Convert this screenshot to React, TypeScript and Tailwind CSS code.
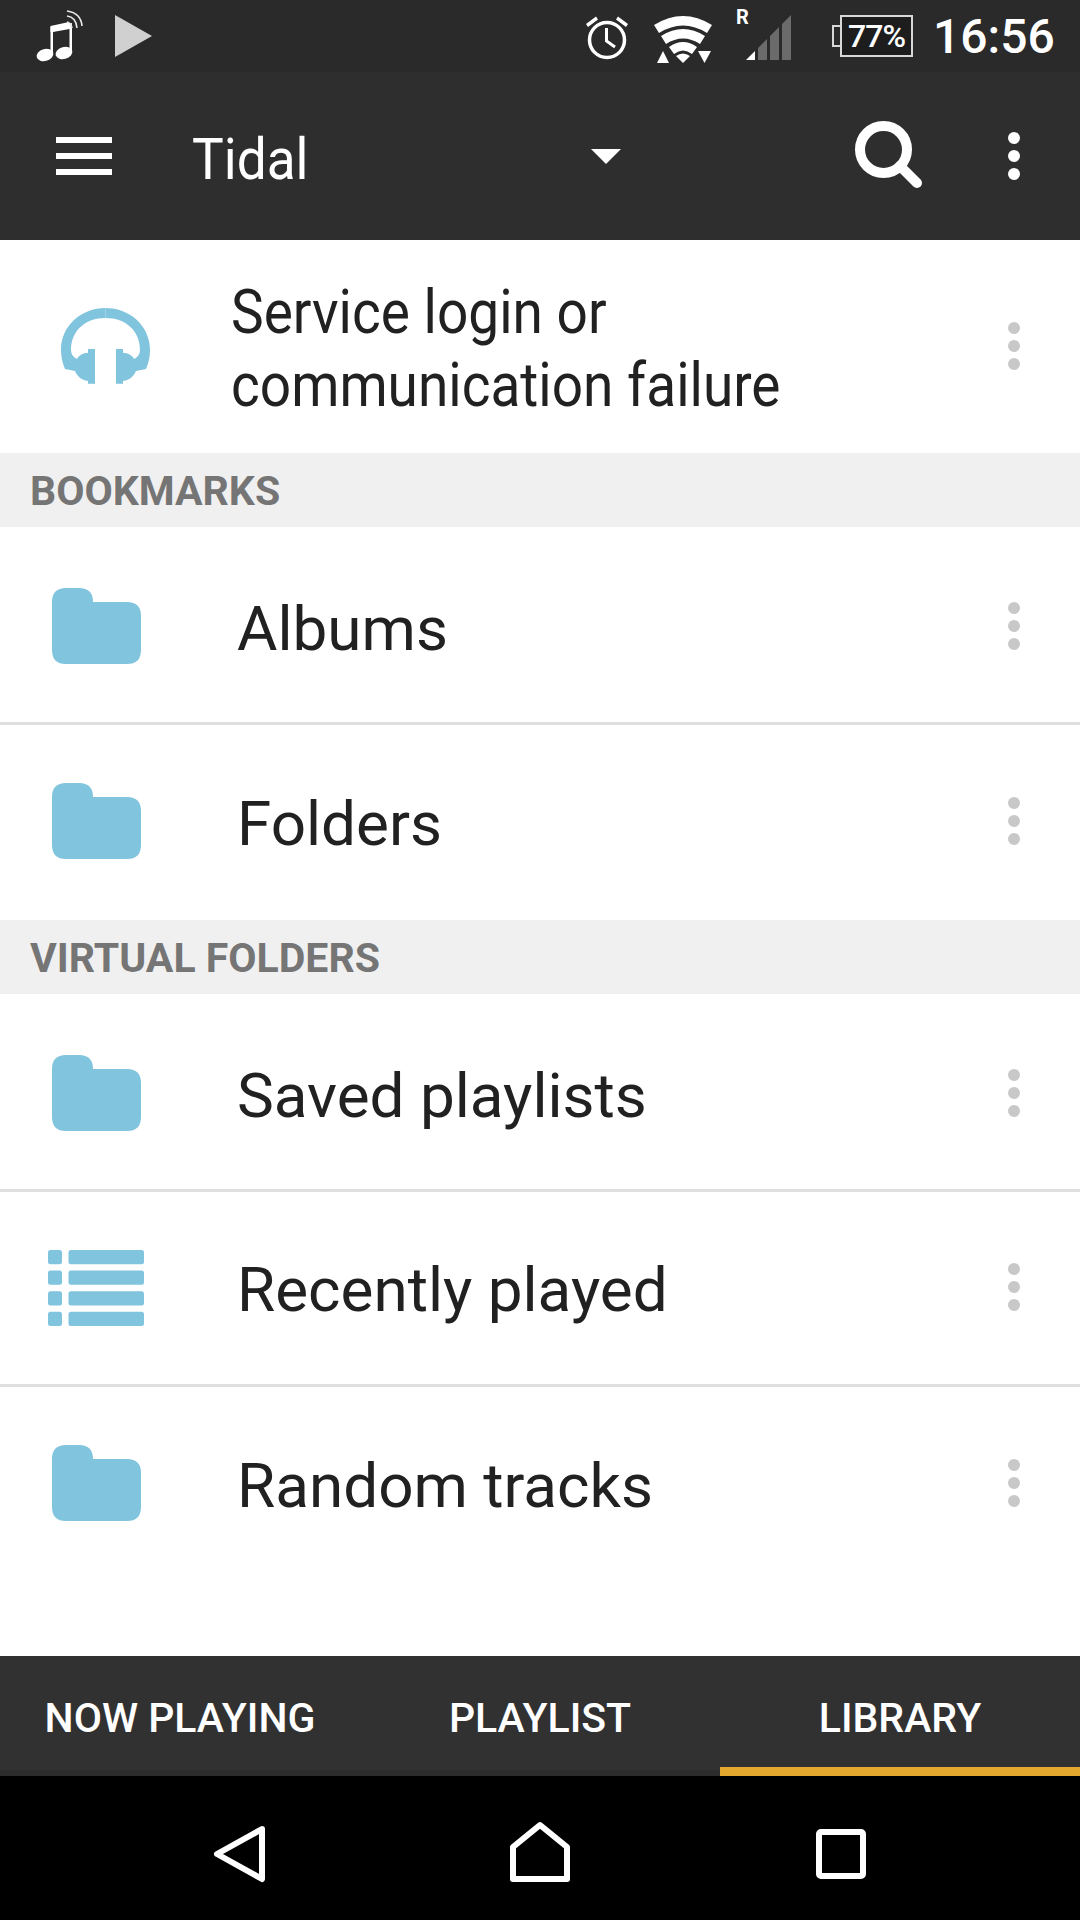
const FolderIcon = () => (
  <svg width="89" height="76" viewBox="0 0 89 76" className="block">
    <path d="M14 0H27Q41 0 41 14H75Q89 14 89 28V62Q89 76 75 76H14Q0 76 0 62V14Q0 0 14 0Z" fill="#81c4de" />
  </svg>
);

const ListIcon = () => (
  <svg width="96" height="76" viewBox="0 0 96 76" className="-ml-[2px] mt-[2px] block" fill="#81c4de">
    {[0, 20.6, 41.2, 61.8].map((y) => (
      <g key={y}>
        <rect x="0" y={y} width="14" height="14.2" rx="2.5" />
        <rect x="20.5" y={y} width="75.5" height="14.2" rx="2.5" />
      </g>
    ))}
  </svg>
);

const HeadphonesIcon = () => (
  <svg width="89" height="76" viewBox="0 0 89 76" className="block" fill="#81c4de">
    <path d="M4 61Q0 52 0 42C0 18 20 0 44.5 0V10C24 10 10 23 10 42C10 46 12 49 15.7 51C18 47 22 45 27 44.7V41H34V75.7H27V73C20 72 16 68 14 63Z" />
    <path d="M85 61Q89 52 89 42C89 18 69 0 44.5 0V10C65 10 79 23 79 42C79 46 77 49 73.3 51C71 47 67 45 62 44.7V41H55V75.7H62V73C69 72 73 68 75 63Z" />
  </svg>
);

const Dots = ({ color }: { color: string }) => (
  <svg width="12" height="48" viewBox="0 0 12 48" className="block" fill={color}>
    <circle cx="6" cy="6" r="6" />
    <circle cx="6" cy="24" r="6" />
    <circle cx="6" cy="42" r="6" />
  </svg>
);

const Row = ({ label, icon, className }: { label: string; icon: React.ReactNode; className: string }) => (
  <div className={`flex items-center ${className}`}>
    <div className="flex w-[237px] shrink-0 justify-center pr-[44px]">{icon}</div>
    <div className="flex-1 pt-[6px] text-[62px] leading-none text-[#212121]">{label}</div>
    <div className="mr-[60px]">
      <Dots color="#c8c8c8" />
    </div>
  </div>
);

const SectionHeader = ({ label }: { label: string }) => (
  <div className="flex h-[74px] items-center bg-[#f0f0f0] pl-[30px] pt-[3px] text-[41px] font-bold text-[#757575]">{label}</div>
);

const StatusBar = () => (
  <div className="flex h-[72px] items-start bg-[#2a2a2a]">
    <svg width="48" height="54" viewBox="0 0 48 54" className="ml-[35px] mt-[9px]">
      <g fill="#fff">
        <ellipse cx="10" cy="46" rx="8.5" ry="6" transform="rotate(-15 10 46)" />
        <ellipse cx="29" cy="44" rx="8.5" ry="6" transform="rotate(-15 29 44)" />
        <path d="M15.5 46V18L37 14V44H34.5V20L18 23V46Z" />
        <path d="M15.5 17L34 13V19L15.5 23Z" />
      </g>
      <g fill="none" stroke="#e8e8e8" strokeWidth="1.6">
        <path d="M32 13Q36 14 37 19" />
        <path d="M32 7Q41 8 42 19" />
        <path d="M32 2Q46 4 47 17" />
      </g>
    </svg>
    <svg width="37" height="42" viewBox="0 0 37 42" className="ml-[32px] mt-[15px]">
      <path d="M0 0L37 21L0 42Z" fill="#d0d0d0" />
    </svg>
    <svg width="44" height="46" viewBox="0 0 44 46" className="ml-[433px] mt-[14px]">
      <circle cx="22" cy="26" r="17.5" fill="none" stroke="#fff" strokeWidth="3.5" />
      <path d="M21.5 14V27L30 33" fill="none" stroke="#fff" strokeWidth="3" />
      <path d="M1 10L11 2.5L13 5.5L3 13ZM43 10L33 2.5L31 5.5L41 13Z" fill="#fff" />
    </svg>
    <svg width="60" height="50" viewBox="0 0 60 50" className="ml-[25px] mt-[14px]" fill="#fff">
      <path d="M0 11Q29 -7 58 11L53 19Q29 4 5 19Z" />
      <path d="M7 22Q29 8 51 22L46 30Q29 19 12 30Z" />
      <path d="M15 33Q29 23 43 33L38 40Q29 33 20 40Z" />
      <path d="M22 42Q29 37 36 42L29 49Z" />
      <path d="M3 49L9 37L15 49Z" />
      <path d="M44 37H57L50.5 49Z" />
    </svg>
    <div className="ml-[22px] mt-[6px] w-[16px] text-[20px] font-bold leading-[22px] text-white">R</div>
    <svg width="46" height="46" viewBox="0 0 46 46" className="-ml-[6px] mt-[15px]">
      <path d="M0 45L9 36V45Z" fill="#fff" />
      <path d="M12 33L21 24V45H12ZM24 21L33 12V45H24ZM36 9L45 0V45H36Z" fill="#6b6b6b" />
    </svg>
    <div className="relative ml-[48px] mt-[15px] flex h-[42px] w-[73px] items-center justify-center border-2 border-[#d8d8d8] bg-[#1d1d1d] text-[32px] font-medium leading-none text-white">
      <div className="absolute -left-[10px] top-[8px] h-[22px] w-[8px] border-2 border-r-0 border-[#d8d8d8]" />
      <span className="tracking-[-1px]">77%</span>
    </div>
    <div className="ml-[20px] mt-[10px] text-[48px] font-medium leading-[54px] text-white">16:56</div>
  </div>
);

const Toolbar = () => (
  <div className="flex h-[168px] items-center bg-[#2e2e2e] text-white">
    <div className="ml-[56px] flex w-[56px] flex-col gap-[10px]">
      <div className="h-[6px] bg-white" />
      <div className="h-[6px] bg-white" />
      <div className="h-[6px] bg-white" />
    </div>
    <div className="ml-[80px] w-[399px] origin-left scale-x-[0.917] pt-[5px] text-[58px] leading-none">Tidal</div>
    <svg width="30" height="15" viewBox="0 0 30 15">
      <path d="M0 0H30L15 15Z" fill="#fff" />
    </svg>
    <svg width="68" height="68" viewBox="0 0 68 68" className="ml-[234px] -mt-[2px]">
      <circle cx="28.5" cy="28.5" r="23.5" fill="none" stroke="#fff" strokeWidth="10" />
      <path d="M45 45L62 62" stroke="#fff" strokeWidth="10" strokeLinecap="round" />
    </svg>
    <div className="ml-[85px]">
      <Dots color="#fff" />
    </div>
  </div>
);

const NavBar = () => (
  <div className="flex h-[144px] bg-black">
    <svg width="56" height="62" viewBox="0 0 56 62" className="ml-[212px] mt-[47px]">
      <path d="M50 6L5 31L50 56Z" fill="none" stroke="#fff" strokeWidth="6" strokeLinejoin="round" />
    </svg>
    <svg width="62" height="62" viewBox="0 0 62 62" className="ml-[241px] mt-[45px]">
      <path d="M31 4L58 26V58H4V26Z" fill="none" stroke="#fff" strokeWidth="6" strokeLinejoin="round" />
    </svg>
    <svg width="52" height="52" viewBox="0 0 52 52" className="ml-[244px] mt-[52px]">
      <rect x="4" y="4" width="44" height="44" rx="2" fill="none" stroke="#fff" strokeWidth="6" />
    </svg>
  </div>
);

export default function App() {
  return (
    <div className="flex h-[1920px] w-[1080px] flex-col overflow-hidden bg-white font-['Roboto',sans-serif]">
      <StatusBar />
      <Toolbar />

      <div className="flex h-[213px] items-center pb-[2px]">
        <div className="flex w-[231px] shrink-0 justify-center pr-[21px]">
          <HeadphonesIcon />
        </div>
        <div className="flex-1 pt-[5px] text-[62px] leading-[73px] text-[#212121]">
          <div className="origin-left scale-x-[0.887] whitespace-nowrap">Service login or</div>
          <div className="origin-left scale-x-[0.887] whitespace-nowrap">communication failure</div>
        </div>
        <div className="mr-[60px]">
          <Dots color="#c8c8c8" />
        </div>
      </div>

      <SectionHeader label="BOOKMARKS" />
      <Row label="Albums" icon={<FolderIcon />} className="h-[198px] border-b-[3px] border-[#dfdfdf] pt-[3px]" />
      <Row label="Folders" icon={<FolderIcon />} className="h-[195px] pb-[4px]" />
      <SectionHeader label="VIRTUAL FOLDERS" />
      <Row label="Saved playlists" icon={<FolderIcon />} className="h-[198px] border-b-[3px] border-[#dfdfdf] pt-[2px]" />
      <Row label="Recently played" icon={<ListIcon />} className="h-[195px] border-b-[3px] border-[#dfdfdf] pb-[3px]" />
      <Row label="Random tracks" icon={<FolderIcon />} className="h-[192px]" />

      <div className="flex-1" />

      <div className="relative grid h-[120px] grid-cols-3 border-b-[6px] border-[#2b2b2b] bg-[#313131] pt-[11px] text-[41px] font-medium text-white">
        <div className="flex items-center justify-center">NOW PLAYING</div>
        <div className="flex items-center justify-center">PLAYLIST</div>
        <div className="flex items-center justify-center">LIBRARY</div>
        <div className="absolute -bottom-[6px] right-0 h-[9px] w-[360px] bg-[#e5a82e]" />
      </div>
      <NavBar />
    </div>
  );
}
